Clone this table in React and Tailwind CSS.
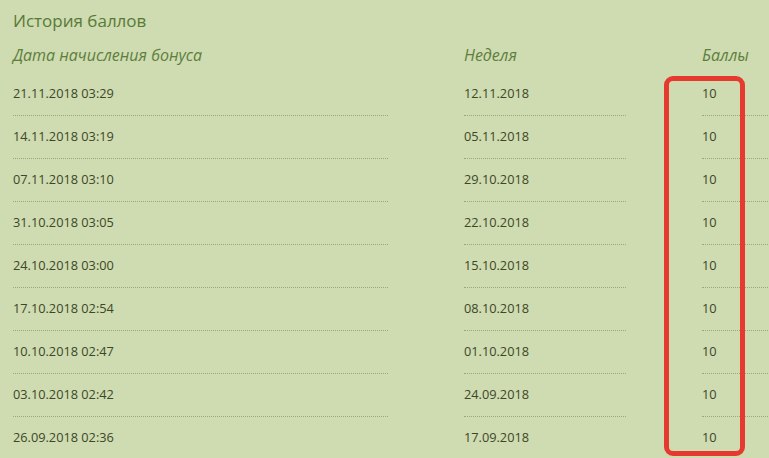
import React from 'react';

const rows = [
  ['21.11.2018 03:29', '12.11.2018', '10'],
  ['14.11.2018 03:19', '05.11.2018', '10'],
  ['07.11.2018 03:10', '29.10.2018', '10'],
  ['31.10.2018 03:05', '22.10.2018', '10'],
  ['24.10.2018 03:00', '15.10.2018', '10'],
  ['17.10.2018 02:54', '08.10.2018', '10'],
  ['10.10.2018 02:47', '01.10.2018', '10'],
  ['03.10.2018 02:42', '24.09.2018', '10'],
  ['26.09.2018 02:36', '17.09.2018', '10'],
];

const grid = 'grid grid-cols-[375px_162px_162px] gap-x-[76px]';
const cell = 'h-[43px] flex items-center border-b border-dotted border-[#97a97a]';

function App() {
  return (
    <div className="relative w-[769px] h-[458px] overflow-hidden bg-[#cfdbb0] pl-[13px] font-['Open_Sans',sans-serif]">
      <h2 className="pt-[11px] text-[17px] leading-[20px] font-medium text-[#587a37]">История баллов</h2>

      {/* Header */}
      <div className={`${grid} h-[42px] pt-[14px] text-[16px] leading-[20px] italic text-[#5d7f3e]`}>
        <div>Дата начисления бонуса</div>
        <div>Неделя</div>
        <div>Баллы</div>
      </div>

      {/* Rows */}
      {rows.map((row) => (
        <div key={row[0]} className={`${grid} text-[12.75px] text-[#3c4728]`}>
          {row.map((value, i) => (
            <div key={i} className={cell}>{value}</div>
          ))}
        </div>
      ))}

      {/* Highlight annotation */}
      <div className="absolute left-[664px] top-[76px] w-[81px] h-[380px] border-[5px] border-[#e63a30] rounded-[9px]" />
    </div>
  );
}

export default App;
